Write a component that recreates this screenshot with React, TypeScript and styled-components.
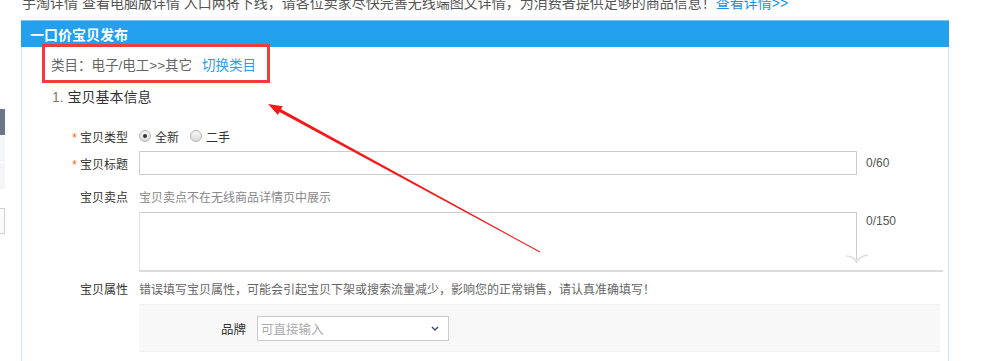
import styled, { createGlobalStyle } from "styled-components";

const GlobalStyle = createGlobalStyle`
    html, body {
        margin: 0;
        padding: 0;
        background: #fff;
        overflow: hidden;
    }
    body {
        font-family: "Liberation Sans", "Noto Sans CJK SC", sans-serif;
        font-size: 12px;
        color: #333;
    }
    * {
        box-sizing: border-box;
    }
`

const Page = styled.div`
    position: relative;
    display: flex;
    width: 1000px;
    height: 361px;
    overflow: hidden;
`
const Rail = styled.div`
    width: 5px;
    display: flex;
    flex-direction: column;
    padding-top: 109px;
`
const RailItem = styled.div<{ $dark?: boolean; $boxed?: boolean; $top?: number }>`
    height: 26px;
    margin-top: ${props => props.$top || 0}px;
    background: ${props => (props.$dark ? '#6a7786' : props.$boxed ? '#fbfbfb' : '#f3f5f8')};
    border: ${props => (props.$boxed ? '1px solid #cfcfcf' : 'none')};
    border-left: none;
`
const Main = styled.div`
    margin-left: 16px;
    width: 928px;
    display: flex;
    flex-direction: column;
`
const Notice = styled.div`
    margin-top: -7px;
    height: 20px;
    line-height: 20px;
    padding-left: 1px;
    font-size: 14px;
    color: #555;
    white-space: nowrap;
`
const NoticeLink = styled.a`
    color: #1a90e8;
    text-decoration: none;
`
const Panel = styled.section`
    margin-top: 7px;
    display: flex;
    flex-direction: column;
`
const PanelHeader = styled.h2`
    margin: 0;
    height: 27px;
    line-height: 26px;
    padding-left: 9px;
    background: #23a1ef;
    border-top: 1px solid #7ac5f6;
    color: #fff;
    font-size: 14px;
    font-weight: bold;
    font-family: "Noto Sans CJK SC", sans-serif;
`
const PanelBody = styled.div`
    height: 314px;
    border-left: 1px solid #cce6fb;
    border-right: 1px solid #cce6fb;
    display: flex;
    flex-direction: column;
`
const Category = styled.div`
    margin: -3px 0 0 20px;
    width: 228px;
    height: 39px;
    border: 3px solid #f23c3c;
    padding: 9px 0 0 6px;
    line-height: 20px;
    font-size: 13.5px;
    color: #666;
    white-space: nowrap;
`
const SwitchLink = styled.a`
    margin-left: 10px;
    color: #2b9cee;
    text-decoration: none;
`
const SectionTitle = styled.h3`
    margin: 4px 0 0 30px;
    line-height: 20px;
    font-size: 14px;
    font-weight: normal;
    color: #333;
`
const Num = styled.span`
    color: #8b7a55;
`
const FormRow = styled.div<{ $top: number; $height?: number }>`
    margin-top: ${props => props.$top}px;
    display: grid;
    grid-template-columns: 117px auto;
    align-items: center;
    min-height: ${props => props.$height || 20}px;
`
const Label = styled.div`
    text-align: right;
    padding-right: 11px;
    font-size: 12px;
    color: #333;
    white-space: nowrap;
`
const Required = styled.span`
    color: #f60;
    margin-right: 3px;
`
const Field = styled.div`
    display: flex;
    align-items: center;
`
const RadioItem = styled.label`
    display: flex;
    align-items: center;
    margin-right: 11px;
    font-size: 12px;
    color: #333;
`
const RadioDot = styled.span<{ $checked?: boolean }>`
    position: relative;
    width: 12px;
    height: 12px;
    margin-right: 4px;
    border-radius: 50%;
    border: 1px solid #b3b3b3;
    background: linear-gradient(#f7f7f7, #dcdcdc);

    &::after {
        content: "";
        display: ${props => (props.$checked ? 'block' : 'none')};
        position: absolute;
        left: 3px;
        top: 3px;
        width: 4px;
        height: 4px;
        border-radius: 50%;
        background: #333;
    }
`
const TextInput = styled.div`
    width: 718px;
    height: 24px;
    border: 1px solid #ccc;
    background: #fff;
`
const Counter = styled.span`
    margin-left: 9px;
    font-family: "Liberation Sans", sans-serif;
    font-size: 12px;
    color: #555;
`
const Hint = styled.span<{ $dark?: boolean }>`
    font-size: 12px;
    color: ${props => (props.$dark ? '#666' : '#888')};
    white-space: nowrap;
`
const TextareaWrap = styled.div`
    width: 804px;
    height: 60px;
    display: flex;
    align-items: flex-start;
    border-bottom: 2px solid #dcdcdc;
`
const TextareaBox = styled.div`
    position: relative;
    width: 718px;
    height: 58px;
    border-top: 1px solid #ccc;
    border-left: 1px solid #e2e2e2;

    &::after {
        content: "";
        position: absolute;
        right: 0;
        top: 0;
        width: 1px;
        height: 47px;
        background: #ccc;
    }
`
const Hook = styled.svg`
    position: absolute;
    right: -12px;
    bottom: 7px;
`
const TextareaCounter = styled(Counter)`
    margin-top: 1px;
    line-height: 16px;
`
const AttrBox = styled.div`
    margin-top: 6px;
    margin-left: 117px;
    width: 801px;
    height: 48px;
    background: #f8f8f8;
    border-top: 1px solid #f1f1f1;
    border-bottom: 1px solid #f1f1f1;
    display: flex;
    align-items: center;
`
const AttrLabel = styled.span`
    width: 107px;
    margin-right: 11px;
    text-align: right;
    font-size: 12.5px;
    color: #333;
`
const Select = styled.div`
    width: 192px;
    height: 25px;
    border: 1px solid #ccc;
    background: #fff;
    display: flex;
    align-items: center;
    justify-content: space-between;
    padding: 0 9px 0 3px;
    font-size: 12.5px;
    color: #aaa;
`
const Arrow = styled.svg`
    position: absolute;
    left: 0;
    top: 0;
    pointer-events: none;
`

export default function App() {
    return (
        <>
            <GlobalStyle />
            <Page>
                <Rail>
                    <RailItem $dark />
                    <RailItem $top={1} />
                    <RailItem $top={1} />
                    <RailItem $top={19} $boxed />
                </Rail>
                <Main>
                    <Notice>
                        手淘详情 查看电脑版详情 入口两将下线，请各位卖家尽快完善无线端图文详情，为消费者提供足够的商品信息！
                        <NoticeLink href="#">查看详情&gt;&gt;</NoticeLink>
                    </Notice>
                    <Panel>
                        <PanelHeader>一口价宝贝发布</PanelHeader>
                        <PanelBody>
                            <Category>
                                类目：电子/电工&gt;&gt;其它
                                <SwitchLink href="#">切换类目</SwitchLink>
                            </Category>
                            <SectionTitle><Num>1.</Num> 宝贝基本信息</SectionTitle>

                            <FormRow $top={19}>
                                <Label><Required>*</Required>宝贝类型</Label>
                                <Field>
                                    <RadioItem><RadioDot $checked />全新</RadioItem>
                                    <RadioItem><RadioDot />二手</RadioItem>
                                </Field>
                            </FormRow>

                            <FormRow $top={5} $height={24}>
                                <Label><Required>*</Required>宝贝标题</Label>
                                <Field>
                                    <TextInput />
                                    <Counter>0/60</Counter>
                                </Field>
                            </FormRow>

                            <FormRow $top={11}>
                                <Label>宝贝卖点</Label>
                                <Field>
                                    <Hint>宝贝卖点不在无线商品详情页中展示</Hint>
                                </Field>
                            </FormRow>

                            <FormRow $top={6} $height={60}>
                                <Label />
                                <Field>
                                    <TextareaWrap>
                                        <TextareaBox>
                                            <Hook width="24" height="9" viewBox="0 0 24 9">
                                                <path d="M1 2 Q8 2 11.5 8 Q15 2 23 1" fill="none" stroke="#ddd" strokeWidth="1.5" />
                                            </Hook>
                                        </TextareaBox>
                                        <TextareaCounter>0/150</TextareaCounter>
                                    </TextareaWrap>
                                </Field>
                            </FormRow>

                            <FormRow $top={6}>
                                <Label>宝贝属性</Label>
                                <Field>
                                    <Hint $dark>错误填写宝贝属性，可能会引起宝贝下架或搜索流量减少，影响您的正常销售，请认真准确填写！</Hint>
                                </Field>
                            </FormRow>

                            <AttrBox>
                                <AttrLabel>品牌</AttrLabel>
                                <Select>
                                    可直接输入
                                    <svg width="8" height="5" viewBox="0 0 8 5">
                                        <path d="M1 1 L4 4 L7 1" fill="none" stroke="#3b4a6b" strokeWidth="1.4" />
                                    </svg>
                                </Select>
                            </AttrBox>
                        </PanelBody>
                    </Panel>
                </Main>
                <Arrow width="1000" height="361" viewBox="0 0 1000 361">
                    <polygon
                        points="540.2,251.6 281.1,109.3 282.7,106.3 268,104 277.9,115.1 279.5,112.1 539.8,252.4"
                        fill="#f31a1a"
                    />
                </Arrow>
            </Page>
        </>
    )
}
